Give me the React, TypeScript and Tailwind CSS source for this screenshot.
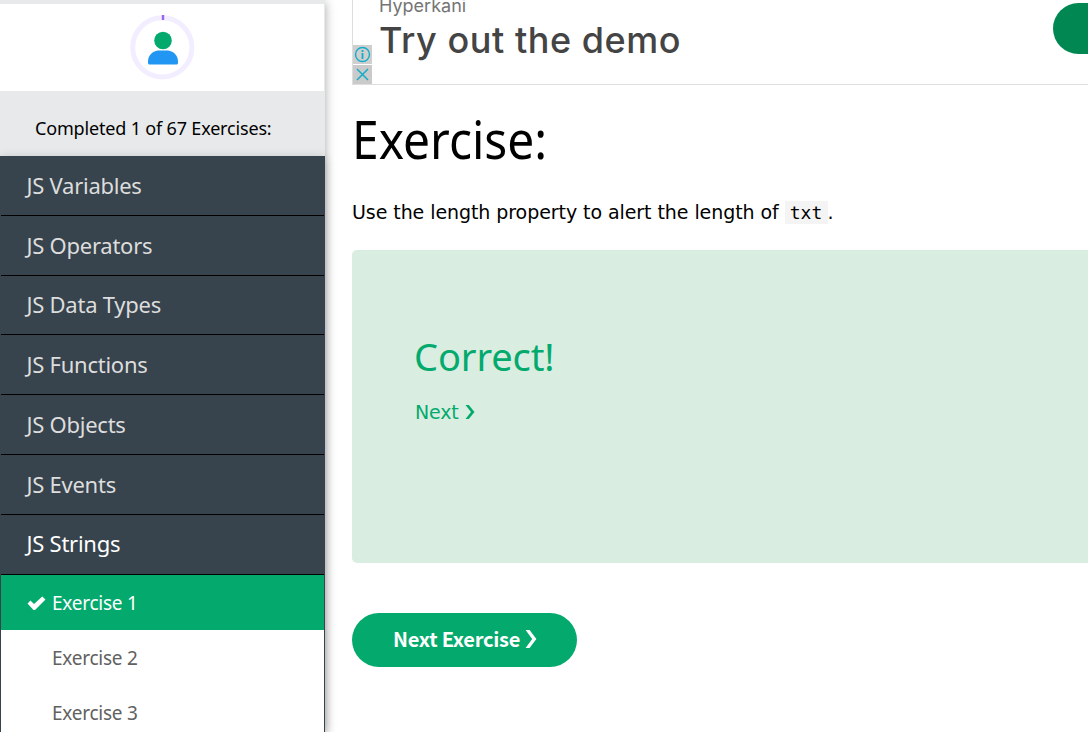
import React from "react";

const sections = [
  "JS Variables",
  "JS Operators",
  "JS Data Types",
  "JS Functions",
  "JS Objects",
  "JS Events",
  "JS Strings",
];

function ProfileIcon() {
  return (
    <svg width="66" height="66" viewBox="0 0 66 66">
      <circle cx="33.300" cy="33.400" r="29.6" fill="none" stroke="#f3eeff" strokeWidth="5" />
      <path d="M34 1v5" stroke="#9763f6" strokeWidth="2.4" />
      <circle cx="34" cy="26.500" r="8.800" fill="#04aa6d" />
      <path d="M19 49v-1.500c0-5.500 4-10.500 10-11h10c6 .5 10 5.500 10 11v1.500q0 1.500-1.500 1.500H20.500q-1.500 0-1.500-1.500z" fill="#2196f3" />
    </svg>
  );
}

function Chevron({ className }: { className: string }) {
  return (
    <svg className={className} viewBox="0 0 10 17" preserveAspectRatio="none" fill="currentColor">
      <path d="M.5 0H3.800L9.500 8.500 3.800 17H.5l5.500-8.500z" />
    </svg>
  );
}

function Sidebar() {
  return (
    <aside className="relative z-10 flex h-[732px] w-[325px] shrink-0 flex-col bg-[#e7e9eb] pt-1 font-['Noto_Sans',sans-serif] shadow-[0_2px_10px_rgba(0,0,0,0.35)]">
      <div className="mr-px flex h-[87px] shrink-0 items-start bg-white pl-[129px] pt-[10px]">
        <ProfileIcon />
      </div>
      <div className="h-[65px] shrink-0 whitespace-nowrap pl-[35px] pt-[25px] text-[18px] leading-6 tracking-[-0.17px] text-black">
        Completed 1 of 67 Exercises:
      </div>
      <nav className="h-[576px] shrink-0 overflow-hidden bg-[#38444d] px-px shadow-[0_2px_10px_rgba(0,0,0,0.2)]">
        {sections.map((name) => (
          <div
            key={name}
            className={`flex h-[59.8px] items-center whitespace-nowrap border-b border-black pl-[25.5px] text-[22px] tracking-[-0.25px] ${
              name === "JS Strings" ? "pb-px text-white" : "text-[#ddd]"
            }`}
          >
            {name}
          </div>
        ))}
        <div className="flex h-[55px] items-center bg-[#04aa6d] pl-[26px] pt-[2px] text-[19px] text-white">
          <svg className="mr-[6px] h-[15px] w-[19px]" viewBox="0 0 19 15" fill="currentColor">
            <path d="M.5 7.500L3.500 4.500 7 8 15.300.5 18.500 3.500 8 14H6.500z" />
          </svg>
          <span className="tracking-[-0.25px]">Exercise 1</span>
        </div>
        <div className="bg-white text-[19px] tracking-[-0.25px] text-[#616161]">
          <div className="flex h-[55px] items-center pl-[51px] pt-[2px]">Exercise 2</div>
          <div className="flex h-[55px] items-center pl-[51px] pt-[2px]">Exercise 3</div>
        </div>
      </nav>
    </aside>
  );
}

function Advert() {
  return (
    <section className="flex h-[85px] shrink-0 justify-between overflow-hidden border-b border-l border-[#dedede]">
      <div className="mt-[45px] flex w-[19px] shrink-0 flex-col gap-px text-[#11adc9]">
        <div className="flex h-[19px] items-center justify-center bg-[#cfcfcf]">
          <svg width="17" height="17" viewBox="0 0 17 17" fill="none" stroke="currentColor">
            <circle cx="8.500" cy="8.500" r="7" strokeWidth="1.400" />
            <path d="M8.500 7v6M8.500 4v2" strokeWidth="1.800" />
          </svg>
        </div>
        <div className="flex h-[19px] items-center justify-center bg-[#cacaca]">
          <svg width="17" height="17" viewBox="0 0 17 17" fill="none" stroke="currentColor" strokeWidth="1.500">
            <path d="M3 3l11 11M14 3L3 14" />
          </svg>
        </div>
      </div>
      <div className="flex flex-1 flex-col whitespace-nowrap pl-[7px] font-['Inter',sans-serif]">
        <div className="h-[18px] text-[18px] leading-[12px] text-[#757575]">Hyperkani</div>
        <div className="text-[36px] font-medium leading-[44px] tracking-[0.55px] text-[#444]">Try out the demo</div>
      </div>
      <div className="mt-[3px] h-[51px] w-[35px] rounded-l-full bg-[#018852]" />
    </section>
  );
}

export default function App() {
  return (
    <div className="flex h-[732px] w-[1088px] overflow-hidden bg-white">
      <Sidebar />
      <main className="flex min-w-0 flex-1 flex-col pl-[27px] text-black">
        <Advert />
        <h1 className="mt-[18px] h-[72px] origin-left scale-x-[0.922] whitespace-nowrap font-['Noto_Sans',sans-serif] text-[52px] leading-[72px]">
          Exercise:
        </h1>
        <p className="mt-[22px] flex h-[30px] items-center whitespace-nowrap font-['DejaVu_Sans',sans-serif] text-[19px] tracking-[-0.07px]">
          <span>Use the length property to alert the length of</span>
          <code className="ml-[6px] flex h-[23px] items-center bg-[#f4f4f4] px-[5px] font-['DejaVu_Sans_Mono',monospace] text-[18px] tracking-[0.1px]">
            txt
          </code>
          <span>.</span>
        </p>
        <section className="mt-[23px] h-[313px] shrink-0 rounded-l-[5px] bg-[#d9ede1] pl-[63px] pt-[79px] text-[#04aa6d]">
          <h2 className="-ml-px h-[54px] font-['Noto_Sans',sans-serif] text-[38px] leading-[54px] tracking-[-0.1px]">Correct!</h2>
          <div className="mt-[14px] flex h-[30px] items-center font-['DejaVu_Sans',sans-serif] text-[19px] tracking-[-0.2px]">
            <span>Next</span>
            <Chevron className="ml-[7px] h-[14px] w-[10px]" />
          </div>
        </section>
        <div className="mt-[50px] flex h-[54px] w-[225px] items-center whitespace-nowrap rounded-full bg-[#04aa6d] pl-[41px] font-['Noto_Sans_CJK_JP',sans-serif] text-[20px] font-bold text-white">
          <span className="-mt-[2px] tracking-[-0.23px]">Next Exercise</span>
          <Chevron className="-mt-[2px] ml-[5px] h-[18px] w-[12px]" />
        </div>
      </main>
    </div>
  );
}
